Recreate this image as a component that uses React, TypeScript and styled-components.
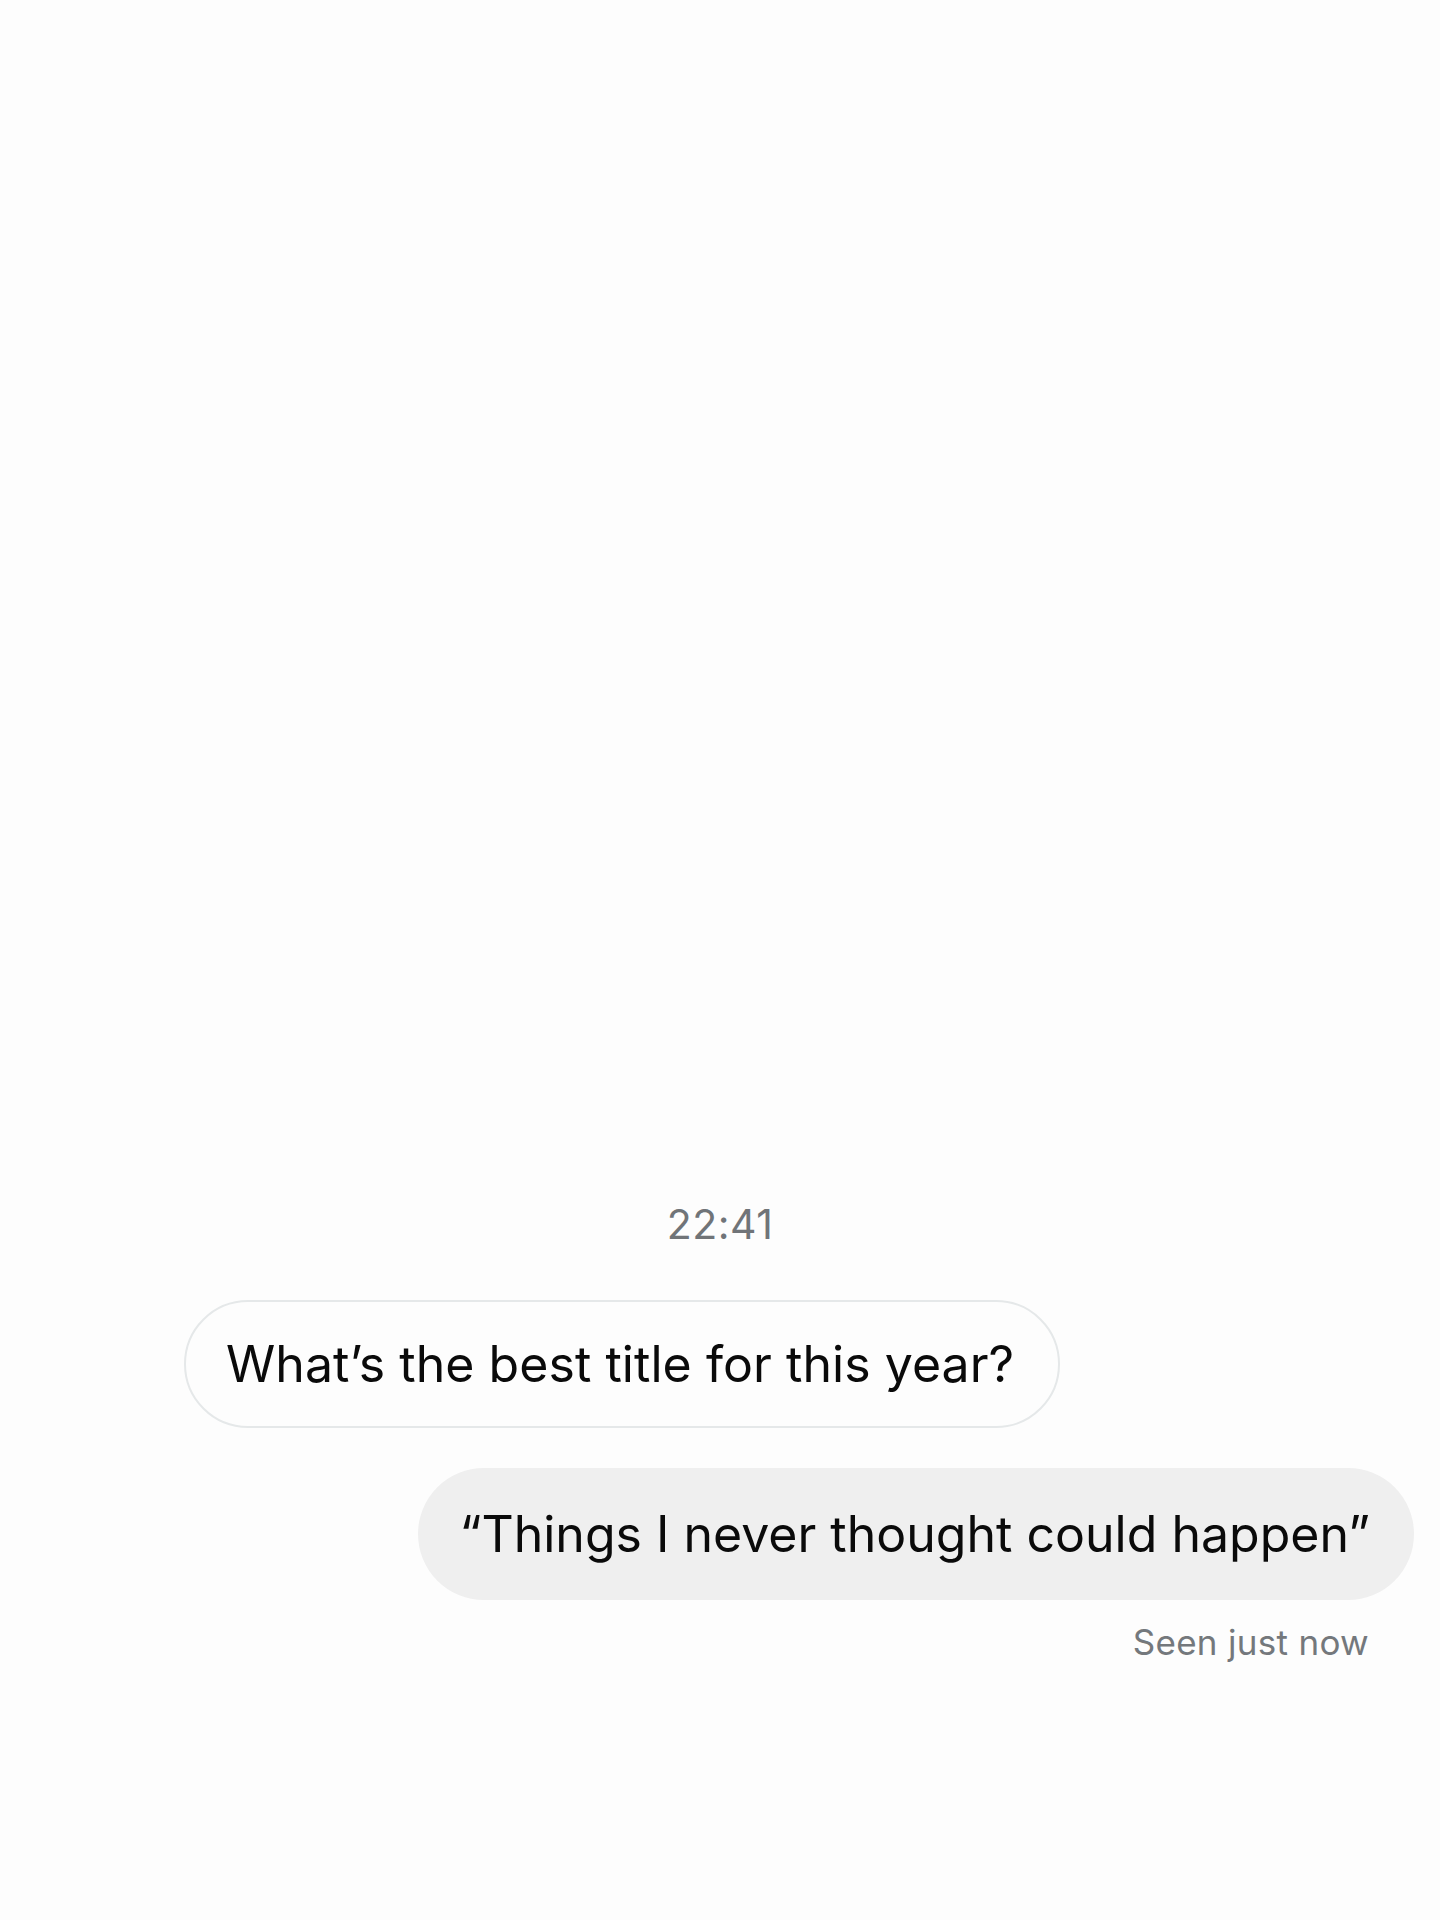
import React from "react";
import styled, { createGlobalStyle } from "styled-components";

const Global = createGlobalStyle`
  html, body { margin: 0; padding: 0; background: #fdfdfd; }
  body { font-family: Inter, "Noto Sans", Roboto, sans-serif; -webkit-font-smoothing: antialiased; }
`;

const Screen = styled.div`
  width: 1440px;
  height: 1920px;
  background: #fdfdfd;
  display: flex;
  flex-direction: column;
  padding-top: 1196px;
  box-sizing: border-box;
`;

const Timestamp = styled.div`
  text-align: center;
  font-size: 41px;
  line-height: 56px;
  color: #707478;
  letter-spacing: 0.5px;
`;

const Row = styled.div<{ $side: "left" | "right"; $gap: number }>`
  display: flex;
  justify-content: ${(p) => (p.$side === "left" ? "flex-start" : "flex-end")};
  margin-top: ${(p) => p.$gap}px;
  padding: 0 26px 0 184px;
`;

const Bubble = styled.div<{ $variant: "in" | "out" }>`
  box-sizing: border-box;
  height: ${(p) => (p.$variant === "in" ? 128 : 132)}px;
  display: flex;
  align-items: center;
  border-radius: 66px;
  font-size: 50px;
  color: #0a0a0a;
  white-space: nowrap;
  ${(p) =>
    p.$variant === "in"
      ? `background: #fdfdfd; border: 2.5px solid #e5e8e9; padding: 0 44px 0 40px; letter-spacing: 0.05px;`
      : `background: #efefef; padding: 0 44px 0 41px;`}
`;

const Seen = styled.div`
  text-align: right;
  padding-right: 71px;
  margin-top: 20px;
  font-size: 35px;
  line-height: 44px;
  color: #74787c;
  letter-spacing: 0.3px;
`;

export default function App() {
  return (
    <>
      <Global />
      <Screen>
        <Timestamp>22:41</Timestamp>
        <Row $side="left" $gap={48}>
          <Bubble $variant="in">What’s the best title for this year?</Bubble>
        </Row>
        <Row $side="right" $gap={40}>
          <Bubble $variant="out">“Things I never thought could happen”</Bubble>
        </Row>
        <Seen>Seen just now</Seen>
      </Screen>
    </>
  );
}
